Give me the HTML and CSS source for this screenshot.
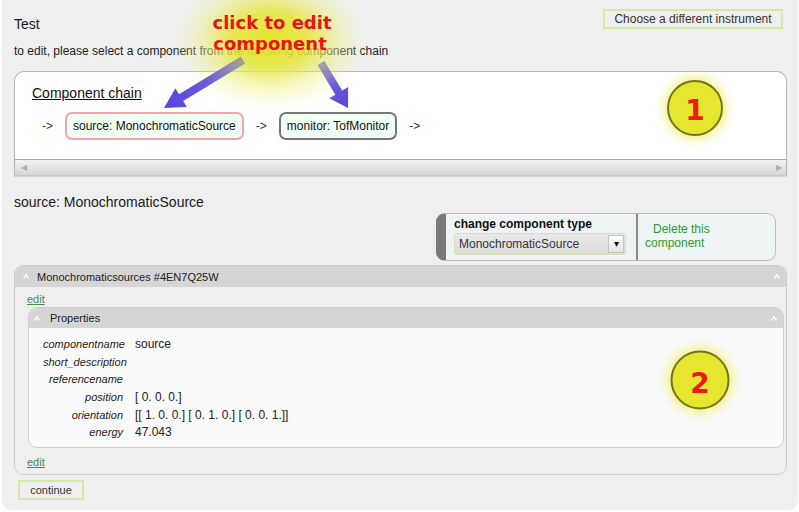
FILE: index.html
```html
<!DOCTYPE html>
<html>
<head>
<meta charset="utf-8">
<title>Test</title>
<link rel="stylesheet" href="styles.css">
</head>
<body>
<div class="page">
  <header class="top">
    <h1 class="title">Test</h1>
    <button class="btn btn-wide">Choose a different instrument</button>
  </header>
  <p class="hint">to edit, please select a component from the following component chain</p>

  <section class="chain">
    <div class="chain-inner">
      <h2 class="chain-title">Component chain</h2>
      <div class="chain-row">
        <span class="arrow">-&gt;</span>
        <span class="comp comp-sel">source: MonochromaticSource</span>
        <span class="arrow">-&gt;</span>
        <span class="comp">monitor: TofMonitor</span>
        <span class="arrow">-&gt;</span>
      </div>
    </div>
    <div class="hscroll"><span class="sarrow">&#9664;</span><span class="sarrow">&#9654;</span></div>
  </section>

  <h2 class="comp-heading">source: MonochromaticSource</h2>

  <div class="type-row">
    <div class="type-box">
      <div class="type-cell">
        <div class="type-label">change component type</div>
        <div class="select"><span>MonochromaticSource</span><span class="select-btn">&#9662;</span></div>
      </div>
      <div class="delete-cell"><a class="delete">Delete this component</a></div>
    </div>
  </div>

  <section class="panel">
    <div class="panel-head">
      <svg class="caret" width="6" height="5" viewBox="0 0 6 5"><polyline points="0.6,4.5 3,0.8 5.4,4.5"/></svg>
      <span class="panel-title">Monochromaticsources #4EN7Q25W</span>
      <svg class="caret caret-right" width="6" height="5" viewBox="0 0 6 5"><polyline points="0.6,4.5 3,0.8 5.4,4.5"/></svg>
    </div>
    <div class="panel-body">
      <a class="edit">edit</a>
      <section class="props">
        <div class="props-head">
          <svg class="caret" width="6" height="5" viewBox="0 0 6 5"><polyline points="0.6,4.5 3,0.8 5.4,4.5"/></svg>
          <span class="props-title">Properties</span>
          <svg class="caret caret-right" width="6" height="5" viewBox="0 0 6 5"><polyline points="0.6,4.5 3,0.8 5.4,4.5"/></svg>
        </div>
        <dl class="props-grid">
          <dt>componentname</dt><dd>source</dd>
          <dt>short_description</dt><dd></dd>
          <dt>referencename</dt><dd></dd>
          <dt>position</dt><dd>[ 0. 0. 0.]</dd>
          <dt>orientation</dt><dd>[[ 1. 0. 0.] [ 0. 1. 0.] [ 0. 0. 1.]]</dd>
          <dt>energy</dt><dd>47.043</dd>
        </dl>
      </section>
      <a class="edit edit-bottom">edit</a>
    </div>
  </section>

  <button class="btn btn-continue">continue</button>

  <svg class="overlay" width="799" height="512" viewBox="0 0 799 512">
    <defs>
      <radialGradient id="glowText" cx="0.5" cy="0.5" r="0.5">
        <stop offset="0" stop-color="#e4e428" stop-opacity="1"/>
        <stop offset="0.4" stop-color="#e6e63a" stop-opacity="0.85"/>
        <stop offset="0.75" stop-color="#eeee80" stop-opacity="0.35"/>
        <stop offset="1" stop-color="#f4f4b0" stop-opacity="0"/>
      </radialGradient>
      <radialGradient id="glowDot" cx="0.5" cy="0.5" r="0.5">
        <stop offset="0.55" stop-color="#eaea40" stop-opacity="0.9"/>
        <stop offset="0.8" stop-color="#f0f070" stop-opacity="0.35"/>
        <stop offset="1" stop-color="#f6f6b0" stop-opacity="0"/>
      </radialGradient>
      <linearGradient id="arrow1" gradientUnits="userSpaceOnUse" x1="243" y1="60" x2="164" y2="108">
        <stop offset="0" stop-color="#8c8ca6" stop-opacity="0.75"/>
        <stop offset="0.45" stop-color="#6a5cd4"/>
        <stop offset="1" stop-color="#5544e2"/>
      </linearGradient>
      <linearGradient id="arrow2" gradientUnits="userSpaceOnUse" x1="321" y1="63" x2="348" y2="108">
        <stop offset="0" stop-color="#8c8ca6" stop-opacity="0.75"/>
        <stop offset="0.5" stop-color="#6a5cd4"/>
        <stop offset="1" stop-color="#5544e2"/>
      </linearGradient>
    </defs>
    <ellipse cx="270" cy="40" rx="98" ry="70" fill="url(#glowText)"/>
    <text class="note" x="272" y="29">click to edit</text>
    <text class="note" x="270" y="50">component</text>
    <polygon points="240.9,56.6 179.0,94.2 175.4,88.2 164,108 186.8,107.0 183.2,101.0 245.1,63.4" fill="url(#arrow1)"/>
    <polygon points="317.6,65.1 335.3,94.7 329.3,98.2 348,108 348.2,86.9 342.2,90.5 324.4,60.9" fill="url(#arrow2)"/>

    <circle cx="695" cy="108" r="40" fill="url(#glowDot)"/>
    <circle class="dot" cx="695" cy="108" r="27"/>
    <text class="num" x="695" y="120">1</text>

    <circle cx="700" cy="380" r="42" fill="url(#glowDot)"/>
    <circle class="dot" cx="700" cy="380" r="28.5"/>
    <text class="num" x="700" y="393">2</text>
  </svg>
</div>
</body>
</html>
```

FILE: styles.css
```css
* { box-sizing: border-box; }

html, body {
  margin: 0;
  padding: 0;
}

body {
  background: #ffffff;
  font-family: "Liberation Sans", Arial, sans-serif;
  color: #222;
  width: 799px;
  height: 512px;
  overflow: hidden;
}

.page {
  position: relative;
  margin-left: 2px;
  width: 796px;
  height: 510px;
  background: #efefef;
  border-radius: 0 0 10px 10px;
  padding: 0 11px 0 12px;
}

/* header */
.top {
  display: flex;
  justify-content: space-between;
  align-items: flex-start;
  height: 32px;
}

.title {
  margin: 0;
  padding-top: 16px;
  font-size: 14px;
  font-weight: normal;
  line-height: 16px;
  color: #1a1a1a;
}

.btn {
  font-family: "Liberation Sans", Arial, sans-serif;
  background: #efefef;
  border: 2px solid #d2eaa4;
  color: #333;
  padding: 0;
  margin: 0;
}

.btn-wide {
  margin-top: 9px;
  margin-right: 4px;
  width: 180px;
  height: 20px;
  font-size: 12px;
}

.hint {
  margin: 12px 0 0;
  font-size: 12px;
  line-height: 14px;
  color: #222;
}

/* component chain */
.chain {
  margin-top: 13px;
  height: 105px;
  background: #fff;
  border: 1px solid #b5b5b5;
  border-bottom-color: #c8c8c8;
  border-radius: 10px 10px 0 0;
  display: flex;
  flex-direction: column;
  overflow: hidden;
  box-shadow: 0 1px 1px rgba(0, 0, 0, 0.12);
}

.chain-inner {
  flex: 1;
  padding: 13px 0 0 17px;
}

.chain-title {
  margin: 0;
  font-size: 14px;
  font-weight: normal;
  line-height: 16px;
  text-decoration: underline;
  color: #111;
}

.chain-row {
  display: flex;
  align-items: center;
  gap: 12px;
  margin-top: 11px;
  padding-left: 10px;
}

.arrow {
  font-size: 12px;
  color: #333;
}

.comp {
  border: 2px solid #777;
  border-radius: 7px;
  background: #f0fff3;
  padding: 5px 6px;
  font-size: 12px;
  line-height: 14px;
  color: #111;
}

.comp-sel {
  border-color: #f4a3ac;
}

.hscroll {
  height: 16px;
  background: linear-gradient(#f2f2f2, #d6d6d6);
  border-top: 1px solid #a9a9a9;
  display: flex;
  justify-content: space-between;
  align-items: center;
  padding: 0 4px 0 6px;
}

.sarrow {
  font-size: 8px;
  color: #b0b0b0;
  line-height: 8px;
}

/* selected component */
.comp-heading {
  margin: 18px 0 0;
  font-size: 14px;
  font-weight: normal;
  line-height: 16px;
  color: #1a1a1a;
}

.type-row {
  display: flex;
  justify-content: flex-end;
  padding-right: 11px;
  margin-top: 3px;
}

.type-box {
  display: flex;
  width: 340px;
  height: 48px;
  background: #eef4f4;
  border: 1px solid #bcbcbc;
  border-left: 10px solid #7a7a7a;
  border-radius: 9px;
}

.type-cell {
  width: 192px;
  padding: 3px 0 0 8px;
  border-right: 2px solid #8a8a8a;
}

.type-label {
  font-size: 12px;
  font-weight: bold;
  line-height: 14px;
  color: #111;
}

.select {
  margin-top: 2px;
  width: 172px;
  height: 22px;
  border: 1px solid #d6e4a8;
  border-radius: 3px;
  background: linear-gradient(#e9e9e9, #dcdcdc);
  display: flex;
  align-items: center;
  justify-content: space-between;
  padding-left: 4px;
  font-size: 12px;
  color: #333;
}

.select-btn {
  width: 16px;
  height: 18px;
  margin-right: 1px;
  background: linear-gradient(#ffffff, #e4e4e4);
  border: 1px solid #c4c4c4;
  font-size: 10px;
  line-height: 16px;
  text-align: center;
  color: #111;
}

.delete-cell {
  flex: 1;
  padding: 8px 40px 0 7px;
  font-size: 12px;
  line-height: 14px;
  text-indent: 8px;
}

.delete {
  color: #2f9b2f;
}

/* component panel */
.panel {
  margin-top: 4px;
  border: 1px solid #cdcdcd;
  border-radius: 9px;
  background: #efefef;
  overflow: hidden;
}

.panel-head {
  height: 21px;
  background: #d5d5d5;
  display: flex;
  align-items: center;
  padding: 0 6px 0 8px;
  font-size: 11px;
  color: #222;
}

.caret {
  flex: none;
  display: block;
}

.caret polyline {
  fill: none;
  stroke: #ffffff;
  stroke-width: 1.4;
}

.caret-right {
  margin-left: auto;
}

.panel-title {
  margin-left: 8px;
}

.panel-body {
  padding: 5px 2px 5px 12px;
}

.edit {
  display: block;
  width: fit-content;
  font-size: 11px;
  line-height: 14px;
  color: #4d8a4d;
  text-decoration: underline;
}

.edit-bottom {
  margin-top: 7px;
}

.props {
  margin: 1px 0 0 1px;
  border: 1px solid #cfcfcf;
  border-radius: 9px;
  background: #fafafa;
  overflow: hidden;
}

.props-head {
  height: 20px;
  background: #d5d5d5;
  display: flex;
  align-items: center;
  padding: 0 6px 0 5px;
  font-size: 11px;
  color: #222;
}

.props-title {
  margin-left: 10px;
}

.props-grid {
  display: grid;
  grid-template-columns: 80px auto;
  grid-auto-rows: 17.7px;
  column-gap: 12px;
  align-items: center;
  margin: 0;
  padding: 7px 0 6px 14px;
}

.props-grid dt {
  font-size: 11px;
  font-style: italic;
  text-align: right;
  color: #222;
  white-space: nowrap;
}

.props-grid dd {
  margin: 0;
  font-size: 12px;
  color: #222;
  white-space: nowrap;
}

.btn-continue {
  margin-top: 5px;
  margin-left: 4px;
  width: 66px;
  height: 20px;
  font-size: 11px;
}

/* annotations overlay */
.overlay {
  position: absolute;
  left: -2px;
  top: 0;
  pointer-events: none;
}

.note {
  font-family: "DejaVu Sans", sans-serif;
  font-weight: bold;
  font-size: 18px;
  fill: #ea1418;
  text-anchor: middle;
}

.dot {
  fill: #e6e62e;
  stroke: #74741c;
  stroke-width: 2;
}

.num {
  font-family: "DejaVu Sans", sans-serif;
  font-weight: bold;
  font-size: 28px;
  fill: #ee1a1a;
  text-anchor: middle;
}
```
